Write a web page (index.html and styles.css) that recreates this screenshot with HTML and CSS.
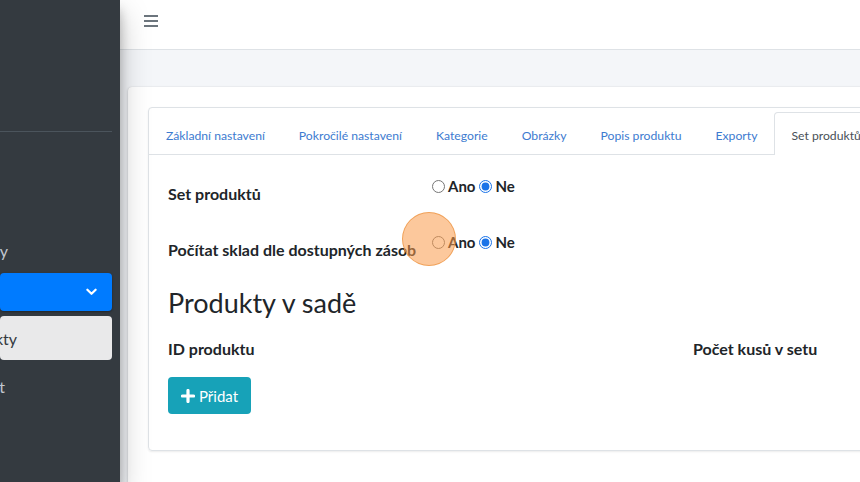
FILE: index.html
```html
<!DOCTYPE html>
<html lang="cs">
<head>
    <meta charset="UTF-8">
    <meta name="viewport" content="width=device-width, initial-scale=1.0">
    <title>Set produktů</title>
    <link rel="stylesheet" href="styles.css">
</head>
<body>
    <aside class="sidebar">
        <div class="sidebar-brand"></div>
        <ul class="side-nav">
            <li class="side-item first">Objednávky</li>
            <li class="side-item active">
                <span>Produkty</span>
                <svg class="chevron" viewBox="0 0 12 8" width="11" height="8"><path d="M1.5 1.5 L6 6 L10.5 1.5" fill="none" stroke="#fff" stroke-width="2.4" stroke-linecap="round" stroke-linejoin="round"/></svg>
            </li>
            <li class="side-item sub">Produkty</li>
            <li class="side-item last">Import</li>
        </ul>
    </aside>

    <div class="main">
        <nav class="navbar">
            <span class="burger">
                <i></i><i></i><i></i>
            </span>
        </nav>

        <div class="content">
            <div class="card">
                <div class="card-body">
                    <div class="tabs-card">
                        <ul class="tabs">
                            <li class="tab">Základní nastavení</li>
                            <li class="tab">Pokročilé nastavení</li>
                            <li class="tab">Kategorie</li>
                            <li class="tab">Obrázky</li>
                            <li class="tab">Popis produktu</li>
                            <li class="tab">Exporty</li>
                            <li class="tab active">Set produktů</li>
                        </ul>

                        <div class="tab-body">
                            <div class="form-row">
                                <label class="form-label">Set produktů</label>
                                <div class="radios">
                                    <label><input type="radio" name="set"> Ano</label>
                                    <label><input type="radio" name="set" checked> Ne</label>
                                </div>
                            </div>
                            <div class="form-row">
                                <label class="form-label">Počítat sklad dle dostupných zásob</label>
                                <div class="radios">
                                    <label><input type="radio" name="sklad"> Ano</label>
                                    <label><input type="radio" name="sklad" checked> Ne</label>
                                    <span class="click-mark"></span>
                                </div>
                            </div>

                            <h2 class="section-title">Produkty v sadě</h2>

                            <div class="set-head">
                                <span class="col-id">ID produktu</span>
                                <span class="col-qty">Počet kusů v setu</span>
                            </div>

                            <button class="btn-add">
                                <svg viewBox="0 0 14 14" width="14" height="14"><path d="M7 1.5v11M1.5 7h11" stroke="#fff" stroke-width="3.2" stroke-linecap="round"/></svg>
                                Přidat
                            </button>
                        </div>
                    </div>
                </div>
            </div>
        </div>
    </div>
</body>
</html>
```

FILE: styles.css
```css
body {
    margin: 0;
    font-family: 'Lato', 'Open Sans', Arial, sans-serif;
    color: #212529;
    display: flex;
    height: 482px;
    overflow: hidden;
    background: #f4f6f9;
}

/* sidebar (scrolled so only the ends of the items show) */
.sidebar {
    width: 120px;
    flex-shrink: 0;
    background: #343a40;
    box-shadow: 0 14px 28px rgba(0, 0, 0, 0.25), 0 10px 10px rgba(0, 0, 0, 0.22);
    position: relative;
    z-index: 2;
    overflow: hidden;
}

.sidebar-brand {
    height: 131px;
    margin-right: 8px;
    border-bottom: 1px solid #4b545c;
}

.side-nav {
    list-style: none;
    margin: 0;
    padding: 99px 8px 0 0;
    display: flex;
    flex-direction: column;
    gap: 4px;
}

.side-item {
    display: flex;
    align-items: center;
    justify-content: flex-end;
    height: 38px;
    font-size: 16px;
    color: #c2c7d0;
    border-radius: 4px;
    white-space: nowrap;
}

.side-item > * {
    flex-shrink: 0;
}

.side-item.first {
    padding-right: 104px;
}

.side-item.active {
    background: #007bff;
    color: #fff;
    box-shadow: 0 1px 3px rgba(0, 0, 0, 0.12), 0 1px 2px rgba(0, 0, 0, 0.24);
    padding-right: 15px;
    gap: 110px;
}

.side-item.sub {
    margin-top: 1px;
    height: 44px;
    padding-right: 95px;
    background: #e9e9ea;
    color: #343a40;
}

.side-item.last {
    margin-top: 3px;
    padding-right: 107px;
}

/* main */
.main {
    flex: 1;
    min-width: 0;
    display: flex;
    flex-direction: column;
}

.navbar {
    height: 50px;
    flex-shrink: 0;
    background: #fff;
    border-bottom: 1px solid #dee2e6;
    padding: 15px 0 0 24px;
    box-sizing: border-box;
}

.burger {
    display: flex;
    flex-direction: column;
    gap: 3px;
    width: 14px;
}

.burger i {
    display: block;
    height: 2px;
    background: #6c757d;
}

.content {
    padding: 37px 0 0 8px;
    width: 800px;
}

.card {
    background: #fff;
    border-radius: 4px;
    box-shadow: 0 0 1px rgba(0, 0, 0, 0.125), 0 1px 3px rgba(0, 0, 0, 0.2);
    height: 420px;
}

.card-body {
    padding: 20px;
}

.tabs-card {
    border: 1px solid #dee2e6;
    border-radius: 4px;
    box-shadow: 0 1px 2px rgba(0, 0, 0, 0.08);
    height: 342px;
}

.tabs {
    list-style: none;
    margin: 0;
    padding: 4px 0 0 0;
    display: flex;
    border-bottom: 1px solid #dee2e6;
    white-space: nowrap;
}

.tab {
    padding: 3px 16px 0 16px;
    height: 38px;
    line-height: 40px;
    border: 1px solid transparent;
    border-bottom: none;
    font-size: 12.2px;
    color: #3d7bd0;
    margin-bottom: -1px;
}

.tab.active {
    background: #fff;
    border-color: #dee2e6;
    border-radius: 4px 4px 0 0;
    color: #495057;
    height: 39px;
}

.tab-body {
    padding: 19px 20px 0 19px;
}

.form-row {
    display: flex;
    height: 56px;
}

.form-label {
    width: 264px;
    font-size: 16px;
    font-weight: 700;
    padding-top: 10px;
}

.radios {
    display: flex;
    align-items: flex-start;
    gap: 4px;
    font-size: 15px;
    font-weight: 700;
    padding-top: 3px;
    position: relative;
}

.radios label {
    display: flex;
    align-items: center;
    height: 18px;
    gap: 3px;
}

.radios input {
    margin: 0;
    width: 13px;
    height: 13px;
    accent-color: #1a73e8;
}

.click-mark {
    position: absolute;
    left: -30px;
    top: -18px;
    width: 52px;
    height: 52px;
    border-radius: 50%;
    background: rgba(250, 155, 75, 0.55);
    border: 1.5px solid rgba(238, 150, 70, 0.8);
}

.section-title {
    margin: 1px 0 0 0;
    font-size: 27px;
    font-weight: 400;
    line-height: 32px;
}

.set-head {
    display: flex;
    font-size: 16px;
    font-weight: 700;
    margin-top: 20px;
}

.col-id {
    width: 525px;
}

.btn-add {
    margin-top: 19px;
    display: flex;
    align-items: center;
    gap: 4px;
    height: 37px;
    padding: 0 13px;
    border: none;
    border-radius: 4px;
    background: #17a2b8;
    color: #fff;
    font-family: inherit;
    font-size: 15px;
}
```
